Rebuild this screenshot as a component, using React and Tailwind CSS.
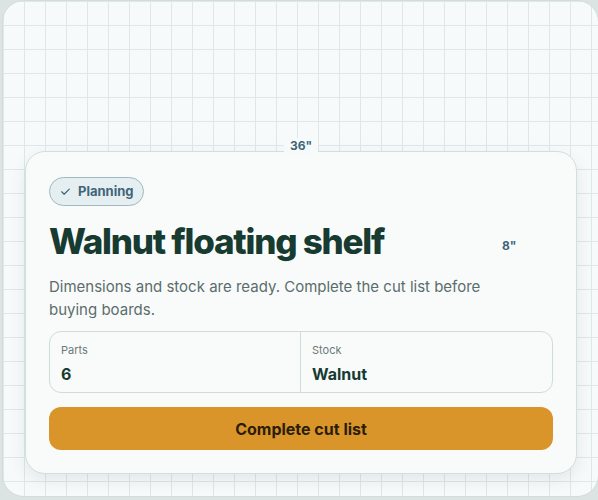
import React from "react";

export default function App() {
  return (
    <div className="w-[598px] h-[500px] bg-[#dbe4e2] pl-[2px] pb-[3px] overflow-hidden" style={{ fontFamily: "Inter, 'Noto Sans', sans-serif" }}>
      <div className="relative w-[597px] h-[497px] rounded-[22px] border border-[#d2dddb] bg-[#f7fafa] bg-[linear-gradient(to_right,#dfe7e7_1px,transparent_1px),linear-gradient(to_bottom,#dfe7e7_1px,transparent_1px)] bg-[size:21px_24px] flex flex-col justify-end pl-[22px] pb-[22px]">
        <div className="relative w-[552px] rounded-[20px] border border-[#d3dfdc] bg-[#f9fbfb] shadow-[0_6px_16px_rgba(40,70,65,0.10)] px-[23px] pb-[23px] pt-[25px]">
          <div className="absolute left-1/2 -translate-x-1/2 -top-[14px] px-1.5 bg-[#f7fafa] text-[12px] leading-[16px] font-bold text-[#3f6579]">36"</div>
          <div className="absolute left-[476px] top-[86px] text-[12px] leading-[16px] font-bold text-[#3f6579]">8"</div>
          <div className="inline-flex items-center gap-[6px] h-[29px] px-[9px] rounded-full border border-[#9fb9c1] bg-[#e5eef0] text-[13px] font-bold text-[#3f6579]">
            <svg width="13" height="13" viewBox="0 0 24 24" fill="none" stroke="currentColor" strokeWidth="2.2" strokeLinecap="round" strokeLinejoin="round"><path d="M5 12.5l4.5 4.5L19 7.5" /></svg>
            <span>Planning</span>
          </div>
          <h1 className="mt-[13px] text-[35px] leading-[44px] font-extrabold tracking-[-0.035em] text-[#173a31]">Walnut floating shelf</h1>
          <p className="mt-[12px] max-w-[440px] text-[15px] leading-[23px] text-[#5b6d6b]">Dimensions and stock are ready. Complete the cut list before buying boards.</p>
          <div className="mt-[10px] grid grid-cols-2 h-[62px] rounded-[12px] border border-[#cfdcd9]">
            <div className="pl-[11px] pt-[11px] border-r border-[#cfdcd9]">
              <div className="text-[11px] leading-[14px] text-[#6a7a78]">Parts</div>
              <div className="mt-[7px] text-[16px] leading-[20px] font-bold text-[#173a31]">6</div>
            </div>
            <div className="pl-[11px] pt-[11px]">
              <div className="text-[11px] leading-[14px] text-[#6a7a78]">Stock</div>
              <div className="mt-[7px] text-[16px] leading-[20px] font-bold text-[#173a31]">Walnut</div>
            </div>
          </div>
          <button className="mt-[14px] w-full h-[43px] rounded-[12px] bg-[#d9952a] text-[16px] font-bold text-[#2b1d08]">Complete cut list</button>
        </div>
      </div>
    </div>
  );
}
